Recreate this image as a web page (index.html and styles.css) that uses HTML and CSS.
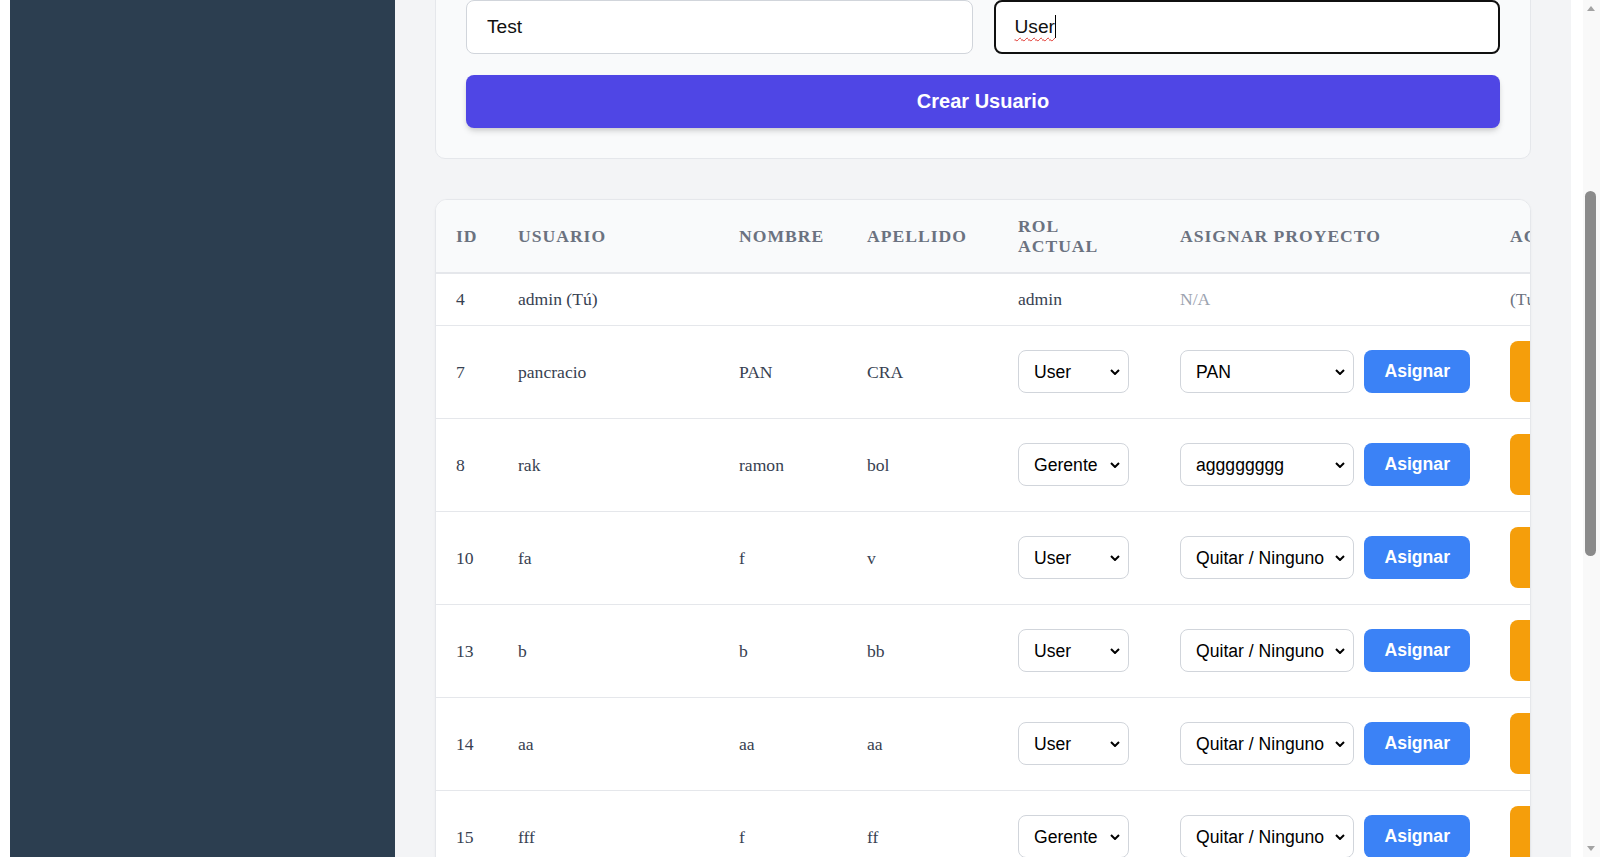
FILE: index.html
```html
<!DOCTYPE html>
<html lang="es">
<head>
<meta charset="utf-8">
<title>Gestión de Usuarios</title>
<link rel="stylesheet" href="styles.css">
</head>
<body>
<div class="layout">
  <aside class="sidebar">
    <div class="brand">Panel Admin</div>
    <nav class="nav">
      <a class="nav-link" href="#">Dashboard</a>
      <a class="nav-link nav-link--active" href="#">Usuarios</a>
      <a class="nav-link" href="#">Proyectos</a>
      <a class="nav-link" href="#">Cerrar sesión</a>
    </nav>
  </aside>
  <main class="main">
    <h1 class="page-title">Gestión de Usuarios</h1>
    <section class="form-card">
      <h2 class="form-title">Crear Nuevo Usuario</h2>
      <form class="form-grid">
        <input class="field" type="text" placeholder="Nombre de usuario">
        <input class="field" type="password" placeholder="Contraseña">
        <input class="field" type="email" placeholder="Correo electrónico">
        <select class="field field-select">
          <option>User</option>
          <option>Gerente</option>
          <option>admin</option>
        </select>
        <input class="field" id="first-name" type="text" value="Test">
        <div class="field field--focused" role="textbox"><span class="misspelled">User</span><span class="caret"></span></div>
        <button class="btn-create" type="button">Crear Usuario</button>
      </form>
    </section>

    <section class="table-card">
      <table class="users-table">
        <colgroup>
          <col class="col-id">
          <col class="col-user">
          <col class="col-name">
          <col class="col-last">
          <col class="col-role">
          <col class="col-assign">
          <col class="col-actions">
        </colgroup>
        <thead>
          <tr>
            <th>ID</th>
            <th>Usuario</th>
            <th>Nombre</th>
            <th>Apellido</th>
            <th>Rol Actual</th>
            <th>Asignar Proyecto</th>
            <th>Acciones</th>
          </tr>
        </thead>
        <tbody>
          <tr>
            <td>4</td>
            <td>admin (Tú)</td>
            <td></td>
            <td></td>
            <td>admin</td>
            <td class="muted">N/A</td>
            <td class="self">(Tú mismo)</td>
          </tr>
          <tr>
            <td>7</td>
            <td>pancracio</td>
            <td>PAN</td>
            <td>CRA</td>
            <td><select class="select select-role"><option selected>User</option><option>Gerente</option></select></td>
            <td><div class="assign"><select class="select select-project"><option>Quitar / Ninguno</option><option selected>PAN</option><option>agggggggg</option></select><button class="btn-assign" type="button">Asignar</button></div></td>
            <td><div class="actions"><button class="btn-role" type="button">Actualizar Rol</button><button class="btn-delete" type="button">Eliminar</button></div></td>
          </tr>
          <tr>
            <td>8</td>
            <td>rak</td>
            <td>ramon</td>
            <td>bol</td>
            <td><select class="select select-role"><option>User</option><option selected>Gerente</option></select></td>
            <td><div class="assign"><select class="select select-project"><option>Quitar / Ninguno</option><option>PAN</option><option selected>agggggggg</option></select><button class="btn-assign" type="button">Asignar</button></div></td>
            <td><div class="actions"><button class="btn-role" type="button">Actualizar Rol</button><button class="btn-delete" type="button">Eliminar</button></div></td>
          </tr>
          <tr>
            <td>10</td>
            <td>fa</td>
            <td>f</td>
            <td>v</td>
            <td><select class="select select-role"><option selected>User</option><option>Gerente</option></select></td>
            <td><div class="assign"><select class="select select-project"><option selected>Quitar / Ninguno</option><option>PAN</option><option>agggggggg</option></select><button class="btn-assign" type="button">Asignar</button></div></td>
            <td><div class="actions"><button class="btn-role" type="button">Actualizar Rol</button><button class="btn-delete" type="button">Eliminar</button></div></td>
          </tr>
          <tr>
            <td>13</td>
            <td>b</td>
            <td>b</td>
            <td>bb</td>
            <td><select class="select select-role"><option selected>User</option><option>Gerente</option></select></td>
            <td><div class="assign"><select class="select select-project"><option selected>Quitar / Ninguno</option><option>PAN</option><option>agggggggg</option></select><button class="btn-assign" type="button">Asignar</button></div></td>
            <td><div class="actions"><button class="btn-role" type="button">Actualizar Rol</button><button class="btn-delete" type="button">Eliminar</button></div></td>
          </tr>
          <tr>
            <td>14</td>
            <td>aa</td>
            <td>aa</td>
            <td>aa</td>
            <td><select class="select select-role"><option selected>User</option><option>Gerente</option></select></td>
            <td><div class="assign"><select class="select select-project"><option selected>Quitar / Ninguno</option><option>PAN</option><option>agggggggg</option></select><button class="btn-assign" type="button">Asignar</button></div></td>
            <td><div class="actions"><button class="btn-role" type="button">Actualizar Rol</button><button class="btn-delete" type="button">Eliminar</button></div></td>
          </tr>
          <tr>
            <td>15</td>
            <td>fff</td>
            <td>f</td>
            <td>ff</td>
            <td><select class="select select-role"><option>User</option><option selected>Gerente</option></select></td>
            <td><div class="assign"><select class="select select-project"><option selected>Quitar / Ninguno</option><option>PAN</option><option>agggggggg</option></select><button class="btn-assign" type="button">Asignar</button></div></td>
            <td><div class="actions"><button class="btn-role" type="button">Actualizar Rol</button><button class="btn-delete" type="button">Eliminar</button></div></td>
          </tr>
          <tr>
            <td>16</td>
            <td>lucia</td>
            <td>Lucía</td>
            <td>Gómez</td>
            <td><select class="select select-role"><option selected>User</option><option>Gerente</option></select></td>
            <td><div class="assign"><select class="select select-project"><option selected>Quitar / Ninguno</option><option>PAN</option><option>agggggggg</option></select><button class="btn-assign" type="button">Asignar</button></div></td>
            <td><div class="actions"><button class="btn-role" type="button">Actualizar Rol</button><button class="btn-delete" type="button">Eliminar</button></div></td>
          </tr>
          <tr>
            <td>17</td>
            <td>jperez</td>
            <td>Juan</td>
            <td>Pérez</td>
            <td><select class="select select-role"><option selected>User</option><option>Gerente</option></select></td>
            <td><div class="assign"><select class="select select-project"><option>Quitar / Ninguno</option><option selected>PAN</option><option>agggggggg</option></select><button class="btn-assign" type="button">Asignar</button></div></td>
            <td><div class="actions"><button class="btn-role" type="button">Actualizar Rol</button><button class="btn-delete" type="button">Eliminar</button></div></td>
          </tr>
          <tr>
            <td>18</td>
            <td>mario</td>
            <td>m</td>
            <td>r</td>
            <td><select class="select select-role"><option>User</option><option selected>Gerente</option></select></td>
            <td><div class="assign"><select class="select select-project"><option selected>Quitar / Ninguno</option><option>PAN</option><option>agggggggg</option></select><button class="btn-assign" type="button">Asignar</button></div></td>
            <td><div class="actions"><button class="btn-role" type="button">Actualizar Rol</button><button class="btn-delete" type="button">Eliminar</button></div></td>
          </tr>
          <tr>
            <td>20</td>
            <td>qq</td>
            <td>q</td>
            <td>qq</td>
            <td><select class="select select-role"><option selected>User</option><option>Gerente</option></select></td>
            <td><div class="assign"><select class="select select-project"><option selected>Quitar / Ninguno</option><option>PAN</option><option>agggggggg</option></select><button class="btn-assign" type="button">Asignar</button></div></td>
            <td><div class="actions"><button class="btn-role" type="button">Actualizar Rol</button><button class="btn-delete" type="button">Eliminar</button></div></td>
          </tr>
          <tr>
            <td>21</td>
            <td>zz</td>
            <td>z</td>
            <td>zz</td>
            <td><select class="select select-role"><option selected>User</option><option>Gerente</option></select></td>
            <td><div class="assign"><select class="select select-project"><option selected>Quitar / Ninguno</option><option>PAN</option><option>agggggggg</option></select><button class="btn-assign" type="button">Asignar</button></div></td>
            <td><div class="actions"><button class="btn-role" type="button">Actualizar Rol</button><button class="btn-delete" type="button">Eliminar</button></div></td>
          </tr>
        </tbody>
      </table>
    </section>
  </main>
</div>

<div class="window-scrollbar" aria-hidden="true">
  <span class="sb-arrow sb-arrow--up"></span>
  <span class="sb-thumb"></span>
  <span class="sb-arrow sb-arrow--down"></span>
</div>

<script src="script.js"></script>
</body>
</html>
```

FILE: styles.css
```css
* {
  box-sizing: border-box;
}

html {
  background: #ffffff;
}

body {
  margin: 0;
  background: #ffffff;
  font-family: "Liberation Serif", "Times New Roman", serif;
  color: #374151;
}

.layout {
  display: flex;
  margin: 0 29px 0 10px;
  min-height: 100vh;
}

.sidebar {
  width: 385px;
  flex-shrink: 0;
  background: #2c3e50;
  color: #ffffff;
  padding: 30px 24px;
}

.brand {
  font-family: "Liberation Sans", Arial, sans-serif;
  font-size: 24px;
  font-weight: bold;
  margin-bottom: 30px;
}

.nav {
  display: flex;
  flex-direction: column;
  gap: 8px;
}

.nav-link {
  color: #cbd5e1;
  text-decoration: none;
  font-family: "Liberation Sans", Arial, sans-serif;
  font-size: 17px;
  padding: 10px 14px;
  border-radius: 6px;
}

.nav-link--active {
  background: #34495e;
  color: #ffffff;
}

.main {
  flex: 1;
  min-width: 0;
  background: #f3f4f6;
  padding: 40px 40px 80px;
}

.page-title {
  margin: 0 0 24px;
  font-size: 32px;
  line-height: 1.2;
  color: #1f2937;
}

.form-card {
  background: #f9fafb;
  border: 1px solid #e5e7eb;
  border-radius: 10px;
  padding: 30px;
}

.form-title {
  margin: 0 0 27px;
  font-size: 22px;
  line-height: 1.2;
  color: #1f2937;
}

.form-grid {
  display: grid;
  grid-template-columns: 1fr 1fr;
  gap: 20px 21px;
}

.field {
  display: block;
  width: 100%;
  height: 54px;
  margin: 0;
  padding: 0 20px;
  border: 1px solid #d1d5db;
  border-radius: 8px;
  background: #ffffff;
  font-family: "Liberation Sans", Arial, sans-serif;
  font-size: 19.2px;
  color: #111111;
  outline: none;
}

.field-select {
  appearance: none;
  -webkit-appearance: none;
}

.field--focused {
  display: flex;
  align-items: center;
  border: 2px solid #101010;
  padding: 0 19px;
}

.misspelled {
  text-decoration: underline wavy #e0332c;
  text-decoration-thickness: 1px;
  text-underline-offset: 4px;
}

.caret {
  display: inline-block;
  width: 1px;
  height: 23px;
  background: #000000;
}

.btn-create {
  grid-column: 1 / -1;
  height: 53px;
  margin-top: 1px;
  border: none;
  border-radius: 8px;
  background: #4f46e5;
  color: #ffffff;
  font-family: "Liberation Sans", Arial, sans-serif;
  font-size: 20px;
  font-weight: bold;
  box-shadow: 0 4px 6px -1px rgba(0, 0, 0, 0.15), 0 2px 4px -1px rgba(0, 0, 0, 0.08);
  cursor: pointer;
}

.table-card {
  margin-top: 40px;
  background: #ffffff;
  border: 1px solid #e5e7eb;
  border-radius: 12px;
  overflow: hidden;
  box-shadow: 0 1px 3px rgba(0, 0, 0, 0.04);
}

.users-table {
  table-layout: fixed;
  width: 1344px;
  border-collapse: separate;
  border-spacing: 0;
  font-size: 17.6px;
  color: #374151;
}

.col-id { width: 62px; }
.col-user { width: 221px; }
.col-name { width: 128px; }
.col-last { width: 151px; }
.col-role { width: 162px; }
.col-assign { width: 330px; }
.col-actions { width: 290px; }

.users-table th {
  padding: 16px 20px 15.5px;
  background: #f9fafb;
  border-bottom: 2px solid #e5e7eb;
  text-align: left;
  vertical-align: middle;
  font-weight: bold;
  text-transform: uppercase;
  letter-spacing: 1px;
  color: #6b7280;
  line-height: 20.2px;
}

.users-table td {
  padding: 15.5px 20px;
  border-bottom: 1px solid #e5e7eb;
  vertical-align: middle;
  line-height: 20.2px;
  white-space: nowrap;
}

.users-table .muted {
  color: #9ca3af;
}

.users-table .self {
  color: #6b7280;
}

.select {
  appearance: none;
  -webkit-appearance: none;
  height: 43px;
  margin: 0;
  padding: 0 28px 0 15px;
  border: 1px solid #d1d5db;
  border-radius: 8px;
  background: #ffffff url("data:image/svg+xml,%3Csvg xmlns='http://www.w3.org/2000/svg' width='10' height='6' viewBox='0 0 10 6'%3E%3Cpath d='M1 1L5 5L9 1' fill='none' stroke='%23000' stroke-width='2'/%3E%3C/svg%3E") no-repeat right 8px center;
  font-family: "Liberation Sans", Arial, sans-serif;
  font-size: 17.6px;
  color: #000000;
  vertical-align: middle;
}

.select-role {
  width: 111px;
}

.select-project {
  width: 175px;
}

.assign {
  display: flex;
  align-items: center;
  gap: 10px;
}

.btn-assign {
  height: 43px;
  padding: 0 20px;
  border: none;
  border-radius: 8px;
  background: #3b82f6;
  color: #ffffff;
  font-family: "Liberation Sans", Arial, sans-serif;
  font-size: 17.6px;
  font-weight: bold;
  cursor: pointer;
}

.actions {
  display: flex;
  align-items: center;
  gap: 10px;
}

.btn-role,
.btn-delete {
  border: none;
  border-radius: 8px;
  color: #ffffff;
  font-family: "Liberation Sans", Arial, sans-serif;
  font-size: 17.6px;
  font-weight: bold;
  line-height: 20px;
  cursor: pointer;
}

.btn-role {
  width: 140px;
  padding: 10.5px 20px;
  white-space: normal;
  text-align: center;
  background: #f59e0b;
}

.btn-delete {
  padding: 10.5px 18px;
  background: #ef4444;
}

/* browser window scrollbar (overlay at the right edge of the viewport) */
.window-scrollbar {
  position: fixed;
  top: 0;
  right: 0;
  bottom: 0;
  width: 17px;
  background: #f9f9f9;
}

.sb-thumb {
  position: absolute;
  top: 191px;
  left: 2px;
  width: 11px;
  height: 365px;
  border-radius: 6px;
  background: #8b8b8b;
}

.sb-arrow {
  position: absolute;
  left: 4px;
  width: 0;
  height: 0;
  border-left: 4.5px solid transparent;
  border-right: 4.5px solid transparent;
}

.sb-arrow--up {
  top: 6px;
  border-bottom: 5px solid #a3a3a3;
}

.sb-arrow--down {
  bottom: 6px;
  border-top: 5px solid #a3a3a3;
}
```

FILE: script.js
```js
(function () {
  function align() {
    var el = document.getElementById('first-name');
    if (!el) return;
    var y = el.getBoundingClientRect().top + window.scrollY;
    window.scrollTo(0, Math.round(y));
  }
  align();
  window.addEventListener('load', align);
})();
```
